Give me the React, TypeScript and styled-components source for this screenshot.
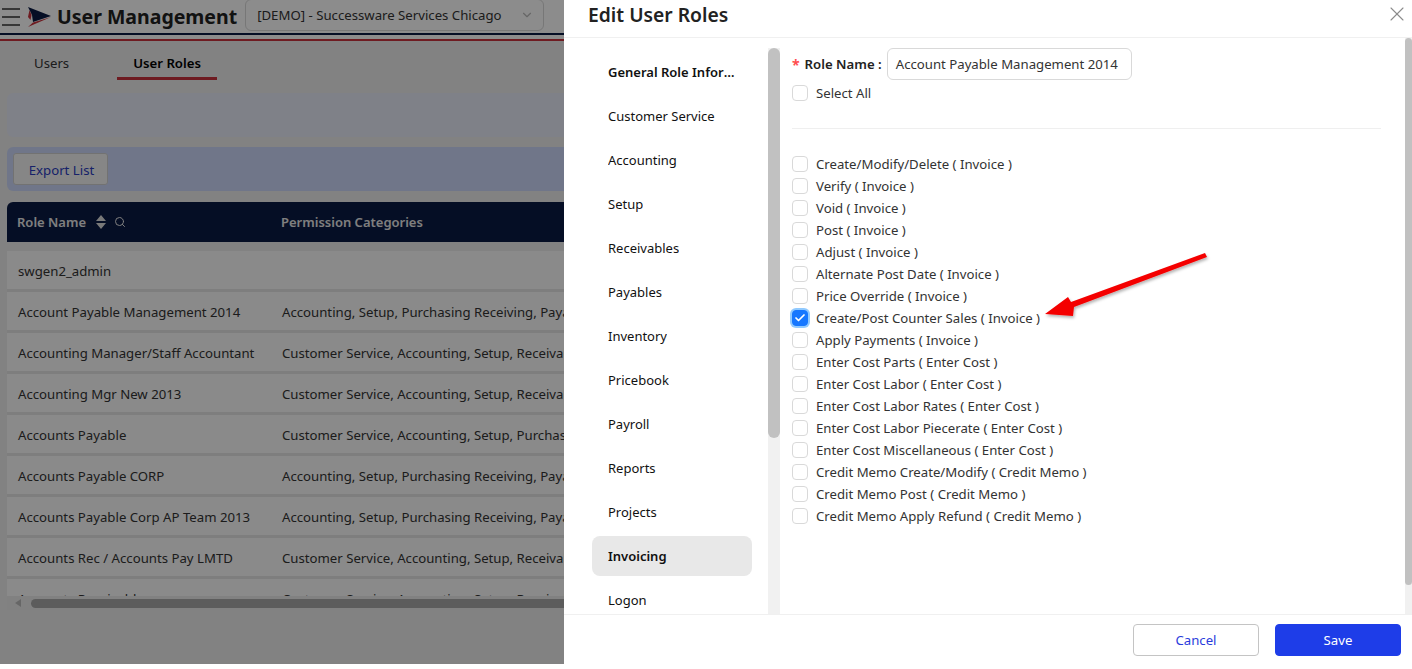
import React from "react";
import styled, { createGlobalStyle } from "styled-components";
import { ChevronDown, Search, X, Check } from "lucide-react";

const GlobalStyle = createGlobalStyle`
  html, body {
    margin: 0;
    padding: 0;
    background: #fff;
    overflow: hidden;
  }
  * {
    box-sizing: border-box;
  }
`;

const ROLES: [string, string][] = [
  ["swgen2_admin", ""],
  ["Account Payable Management 2014", "Accounting, Setup, Purchasing Receiving, Payables, Inventory"],
  ["Accounting Manager/Staff Accountant", "Customer Service, Accounting, Setup, Receivables, Payables"],
  ["Accounting Mgr New 2013", "Customer Service, Accounting, Setup, Receivables, Payables"],
  ["Accounts Payable", "Customer Service, Accounting, Setup, Purchasing Receiving"],
  ["Accounts Payable CORP", "Accounting, Setup, Purchasing Receiving, Payables, Inventory"],
  ["Accounts Payable Corp AP Team 2013", "Accounting, Setup, Purchasing Receiving, Payables, Inventory"],
  ["Accounts Rec / Accounts Pay LMTD", "Customer Service, Accounting, Setup, Receivables, Payables"],
  ["Accounts Receivable", "Customer Service, Accounting, Setup, Receivables, Payables"],
];

const MENU = [
  "General Role Information",
  "Customer Service",
  "Accounting",
  "Setup",
  "Receivables",
  "Payables",
  "Inventory",
  "Pricebook",
  "Payroll",
  "Reports",
  "Projects",
  "Invoicing",
  "Logon",
];

const PERMISSIONS = [
  "Create/Modify/Delete ( Invoice )",
  "Verify ( Invoice )",
  "Void ( Invoice )",
  "Post ( Invoice )",
  "Adjust ( Invoice )",
  "Alternate Post Date ( Invoice )",
  "Price Override ( Invoice )",
  "Create/Post Counter Sales ( Invoice )",
  "Apply Payments ( Invoice )",
  "Enter Cost Parts ( Enter Cost )",
  "Enter Cost Labor ( Enter Cost )",
  "Enter Cost Labor Rates ( Enter Cost )",
  "Enter Cost Labor Piecerate ( Enter Cost )",
  "Enter Cost Miscellaneous ( Enter Cost )",
  "Credit Memo Create/Modify ( Credit Memo )",
  "Credit Memo Post ( Credit Memo )",
  "Credit Memo Apply Refund ( Credit Memo )",
];

const Screen = styled.div`
  position: relative;
  width: 1412px;
  height: 669px;
  overflow: hidden;
  background: #fff;
  font-family: "Noto Sans", "Open Sans", sans-serif;
  font-size: 13.2px;
  color: #222;
`;

const Page = styled.div`
  height: 664px;
  background: #ededed;
  overflow: hidden;
`;

const TopBar = styled.header`
  height: 41px;
  background: #fff;
  display: flex;
  align-items: flex-start;
  padding: 0 0 0 2px;
  border-bottom: 2px solid #c8323c;
  box-shadow: inset 0 -4px 0 #fff, inset 0 -6px 0 #0a1a44;
`;

const Burger = styled.div`
  width: 18px;
  margin-top: 8px;
  display: flex;
  flex-direction: column;
  gap: 6px;
  span {
    height: 2px;
    background: #666;
  }
`;

const LogoMark = styled.svg`
  width: 24px;
  height: 20px;
  margin: 7px 0 0 7px;
  flex: none;
`;

const PageTitle = styled.h1`
  margin: 2px 0 0 6px;
  font-size: 19.5px;
  line-height: 30px;
  font-weight: 700;
  color: #222;
  white-space: nowrap;
`;

const CompanySelect = styled.div`
  width: 299px;
  height: 32px;
  margin: -1px 0 0 8px;
  padding: 0 9px 0 11px;
  display: flex;
  align-items: center;
  justify-content: space-between;
  background: #fff;
  border: 1px solid #d9d9d9;
  border-radius: 6px;
  color: #333;
  white-space: nowrap;
  svg {
    color: #bbb;
  }
`;

const Tabs = styled.nav`
  height: 40px;
  display: flex;
  padding-left: 18px;
`;

const Tab = styled.div<{ $active?: boolean }>`
  height: 39px;
  margin-right: 32px;
  padding: 7px 16px 0;
  display: flex;
  align-items: center;
  font-weight: ${(p) => (p.$active ? 600 : 400)};
  color: ${(p) => (p.$active ? "#000" : "#333")};
  border-bottom: 3px solid ${(p) => (p.$active ? "#c8323c" : "transparent")};
`;

const Content = styled.main`
  padding: 12px 0 0 7px;
`;

const Band = styled.div<{ $strong?: boolean }>`
  height: 44px;
  margin-bottom: 10px;
  padding: 6px;
  border-radius: 6px;
  background: ${(p) => (p.$strong ? "#cdd8fa" : "#e8ecf8")};
`;

const ExportButton = styled.button`
  width: 95px;
  height: 32px;
  background: #f5f5f5;
  border: 1px solid #d0d0d0;
  border-radius: 3px;
  color: #2a3cc0;
  font: inherit;
  padding: 2px 0 0 2px;
`;

const TableWrap = styled.div`
  height: 394px;
  margin-top: 11px;
  overflow: hidden;
`;

const HeadRow = styled.div`
  height: 40px;
  margin-bottom: 9px;
  display: grid;
  grid-template-columns: 264px 1fr;
  align-items: center;
  padding-left: 10px;
  background: #0a1a44;
  border-radius: 6px 6px 0 0;
  color: #e8e8e8;
  font-weight: 600;
  font-size: 13px;
`;

const HeadCell = styled.div`
  display: flex;
  align-items: center;
  gap: 10px;
`;

const SortIcon = styled.svg`
  width: 10px;
  height: 14px;
  fill: #ddd;
`;

const Row = styled.div`
  height: 41px;
  display: grid;
  grid-template-columns: 264px 1fr;
  align-items: center;
  padding: 2px 0 0 11px;
  white-space: nowrap;
  overflow: hidden;
  background: #fbfbfb;
  border-bottom: 3px solid #e6e6e6;
  color: #333;
`;

const HScroll = styled.div`
  height: 14px;
  display: flex;
  align-items: center;
  padding-left: 8px;
  background: #ececec;
  gap: 10px;
`;

const ArrowLeft = styled.div`
  width: 0;
  height: 0;
  border-top: 4px solid transparent;
  border-bottom: 4px solid transparent;
  border-right: 6px solid #bbb;
`;

const HThumb = styled.div`
  flex: 1;
  height: 9px;
  border-radius: 5px;
  background: #a8a8a8;
`;

const Mask = styled.div`
  position: absolute;
  top: 0;
  left: 0;
  right: 0;
  height: 664px;
  background: rgba(0, 0, 0, 0.45);
`;

const Drawer = styled.aside`
  position: absolute;
  top: 0;
  right: 0;
  bottom: 0;
  width: 848px;
  background: #fff;
  display: flex;
  flex-direction: column;
`;

const DrawerHead = styled.div`
  height: 38px;
  flex: none;
  display: flex;
  justify-content: space-between;
  padding: 0 3px 0 24px;
  border-bottom: 1px solid #f0f0f0;
`;

const DrawerTitle = styled.h2`
  margin: 0;
  font-size: 19.3px;
  line-height: 30px;
  font-weight: 600;
  color: #222;
`;

const CloseButton = styled.div`
  margin-top: 2px;
  color: #8c8c8c;
  line-height: 0;
`;

const DrawerBody = styled.div`
  height: 576px;
  flex: none;
  display: flex;
`;

const SideColumn = styled.div`
  width: 216px;
  flex: none;
  display: flex;
  padding-top: 10px;
`;

const Menu = styled.div`
  width: 204px;
  padding: 4px 16px 0 28px;
  display: flex;
  flex-direction: column;
  gap: 4px;
  overflow: hidden;
`;

const MenuItem = styled.div<{ $selected?: boolean; $bold?: boolean }>`
  height: 40px;
  flex: none;
  padding: 0 16px;
  display: flex;
  align-items: center;
  border-radius: 8px;
  background: ${(p) => (p.$selected ? "#e8e8e8" : "transparent")};
  font-weight: ${(p) => (p.$selected || p.$bold ? 600 : 400)};
  color: #111;
  font-size: 13px;
  span {
    overflow: hidden;
    white-space: nowrap;
    text-overflow: ellipsis;
  }
`;

const Track = styled.div<{ $width: number }>`
  width: ${(p) => p.$width}px;
  flex: none;
  background: #f1f1f1;
`;

const Thumb = styled.div<{ $height: number }>`
  height: ${(p) => p.$height}px;
  background: #c1c1c1;
  border-radius: 6px;
`;

const FormArea = styled.div`
  flex: 1;
  padding: 10px 24px 0 12px;
`;

const NameRow = styled.div`
  display: flex;
  align-items: center;
  height: 32px;
`;

const Required = styled.span`
  color: #ff4d4f;
  margin-right: 5px;
  font-size: 14px;
  font-weight: 700;
`;

const NameLabel = styled.label`
  font-weight: 600;
  color: #222;
  margin-right: 5px;
`;

const NameInput = styled.div`
  width: 245px;
  height: 32px;
  padding: 0 8px;
  display: flex;
  align-items: center;
  border: 1px solid #d9d9d9;
  border-radius: 6px;
  color: #333;
  white-space: nowrap;
`;

const CheckRow = styled.div`
  height: 22px;
  display: flex;
  align-items: center;
  gap: 8px;
  color: #333;
  white-space: nowrap;
`;

const Box = styled.span<{ $checked?: boolean }>`
  width: 16px;
  height: 16px;
  flex: none;
  display: flex;
  align-items: center;
  justify-content: center;
  border-radius: 4px;
  border: 1px solid ${(p) => (p.$checked ? "#1677ff" : "#d9d9d9")};
  background: ${(p) => (p.$checked ? "#1677ff" : "#fff")};
  box-shadow: ${(p) => (p.$checked ? "0 0 0 2px #91caff" : "none")};
  color: #fff;
`;

const SelectAll = styled.div`
  margin-top: 2px;
`;

const Divider = styled.hr`
  margin: 24px 0 24px;
  height: 1px;
  border: 0;
  background: #efefef;
`;

const DrawerFoot = styled.div`
  flex: 1;
  display: flex;
  justify-content: flex-end;
  gap: 16px;
  padding: 9px 11px 0 0;
  border-top: 1px solid #f0f0f0;
`;

const FootButton = styled.button<{ $primary?: boolean }>`
  width: 126px;
  height: 32px;
  padding: 0;
  border-radius: 4px;
  border: 1px solid ${(p) => (p.$primary ? "#1e3de8" : "#c4c4c4")};
  background: ${(p) => (p.$primary ? "#1e3de8" : "#fff")};
  color: ${(p) => (p.$primary ? "#fff" : "#2a3cdc")};
  font: inherit;
`;

const Callout = styled.svg`
  position: absolute;
  left: 1040px;
  top: 245px;
  width: 180px;
  height: 80px;
  overflow: visible;
`;

export default function App() {
  return (
    <Screen>
      <GlobalStyle />
      <Page>
        <TopBar>
          <Burger>
            <span />
            <span />
            <span />
          </Burger>
          <LogoMark viewBox="0 0 24 20">
            <path d="M1 0 L24 9 L6 15 L5 8 Z" fill="#0a1a44" />
            <path d="M1 20 L24 10 L6 15.5 Z" fill="#c8323c" />
            <path d="M2.5 3 L4.5 8 L3.5 13 L1 10 Z" fill="#c8323c" />
          </LogoMark>
          <PageTitle>User Management</PageTitle>
          <CompanySelect>
            [DEMO] - Successware Services Chicago
            <ChevronDown size={14} />
          </CompanySelect>
        </TopBar>
        <Tabs>
          <Tab>Users</Tab>
          <Tab $active>User Roles</Tab>
        </Tabs>
        <Content>
          <Band />
          <Band $strong>
            <ExportButton>Export List</ExportButton>
          </Band>
          <TableWrap>
            <HeadRow>
              <HeadCell>
                Role Name
                <SortIcon viewBox="0 0 10 14">
                  <path d="M5 0 L10 6 H0 Z M0 8 H10 L5 14 Z" />
                </SortIcon>
                <Search size={12} style={{ marginLeft: -2 }} />
              </HeadCell>
              <HeadCell>Permission Categories</HeadCell>
            </HeadRow>
            {ROLES.map(([name, cats]) => (
              <Row key={name}>
                <span>{name}</span>
                <span>{cats}</span>
              </Row>
            ))}
          </TableWrap>
          <HScroll>
            <ArrowLeft />
            <HThumb />
          </HScroll>
        </Content>
      </Page>
      <Mask />
      <Drawer>
        <DrawerHead>
          <DrawerTitle>Edit User Roles</DrawerTitle>
          <CloseButton>
            <X size={24} strokeWidth={1.1} />
          </CloseButton>
        </DrawerHead>
        <DrawerBody>
          <SideColumn>
            <Menu>
              {MENU.map((item, i) => (
                <MenuItem key={item} $selected={item === "Invoicing"} $bold={i === 0}>
                  <span>{item}</span>
                </MenuItem>
              ))}
            </Menu>
            <Track $width={12}>
              <Thumb $height={390} />
            </Track>
          </SideColumn>
          <FormArea>
            <NameRow>
              <Required>*</Required>
              <NameLabel>Role Name :</NameLabel>
              <NameInput>Account Payable Management 2014</NameInput>
            </NameRow>
            <SelectAll>
              <CheckRow>
                <Box />
                Select All
              </CheckRow>
            </SelectAll>
            <Divider />
            {PERMISSIONS.map((perm) => {
              const checked = perm.startsWith("Create/Post");
              return (
                <CheckRow key={perm}>
                  <Box $checked={checked}>{checked && <Check size={12} strokeWidth={3.5} />}</Box>
                  {perm}
                </CheckRow>
              );
            })}
          </FormArea>
          <Track $width={7}>
            <Thumb $height={547} />
          </Track>
        </DrawerBody>
        <DrawerFoot>
          <FootButton>Cancel</FootButton>
          <FootButton $primary>Save</FootButton>
        </DrawerFoot>
      </Drawer>
      <Callout viewBox="0 0 180 80">
        <defs>
          <filter id="arrowShadow" x="-10%" y="-20%" width="120%" height="140%">
            <feDropShadow dx="1" dy="2" stdDeviation="1.5" floodColor="#000" floodOpacity="0.3" />
          </filter>
        </defs>
        <path d="M5 69 L28 52 L31 57 L165 8 L167 12 L34 62 L33 71 Z" fill="#f40000" filter="url(#arrowShadow)" />
      </Callout>
    </Screen>
  );
}
